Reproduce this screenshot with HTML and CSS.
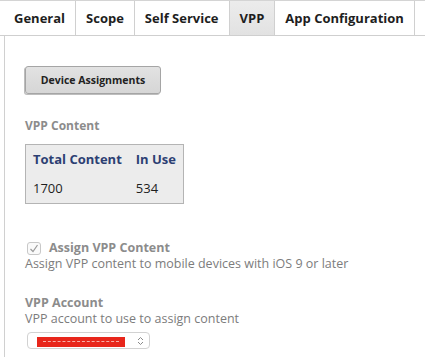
FILE: index.html
```html
<!DOCTYPE html>
<html lang="en">
<head>
  <meta charset="UTF-8" />
  <title>VPP</title>
  <link rel="stylesheet" href="styles.css">
</head>
<body>
  <div class="tabs">
    <a class="tab">General</a>
    <a class="tab">Scope</a>
    <a class="tab">Self Service</a>
    <a class="tab active">VPP</a>
    <a class="tab">App Configuration</a>
  </div>

  <div class="panel">
    <button class="btn">Device Assignments</button>

    <div class="label content-label">VPP Content</div>
    <table class="counts">
      <tr>
        <th>Total Content</th>
        <th>In Use</th>
      </tr>
      <tr>
        <td>1700</td>
        <td>534</td>
      </tr>
    </table>

    <div class="field assign">
      <label class="check-row">
        <span class="checkbox">
          <svg width="10" height="9" viewBox="0 0 10 9"><path d="M1.5 5 L4 7.5 L8.5 1" fill="none" stroke="#9a9a9a" stroke-width="1.2"/></svg>
        </span>
        <span class="label">Assign VPP Content</span>
      </label>
      <div class="help">Assign VPP content to mobile devices with iOS 9 or later</div>
    </div>

    <div class="field account">
      <div class="label">VPP Account</div>
      <div class="help">VPP account to use to assign content</div>
      <div class="select">
        <span class="redacted"></span>
        <svg class="arrows" width="7" height="10" viewBox="0 0 7 10"><path d="M1 4 L3.5 1.5 L6 4 M1 6 L3.5 8.5 L6 6" fill="none" stroke="#8a8a8a" stroke-width="1"/></svg>
      </div>
    </div>
  </div>
</body>
</html>
```

FILE: styles.css
```css
* {
  box-sizing: border-box;
}

body {
  margin: 0;
  font-family: "Open Sans", "DejaVu Sans", sans-serif;
  background: #fff;
  color: #222;
  overflow: hidden;
}

.tabs {
  display: flex;
  height: 36px;
  padding-left: 4px;
  border-top: 1px solid #d4d4d4;
  border-bottom: 1px solid #cfcfcf;
}

.tab {
  display: flex;
  align-items: center;
  padding: 0 10px;
  border-right: 1px solid #d0d0d0;
  font-size: 13px;
  font-weight: 700;
  color: #1e1e1e;
}

.tab.active {
  background: linear-gradient(#ececec, #e2e2e2);
}

.panel {
  height: 321px;
  margin-left: 4px;
  border-left: 1px solid #d0d0d0;
  padding: 30px 0 0 20px;
}

.btn {
  display: block;
  width: 136px;
  height: 28px;
  padding: 0;
  border: 1px solid #a5a5a5;
  border-radius: 3px;
  background: linear-gradient(#e2e2e2, #d6d6d6);
  box-shadow: -1px 1px 0 #bdbdbd;
  font-family: inherit;
  font-size: 10.5px;
  font-weight: 700;
  color: #222;
}

.label {
  font-size: 12.5px;
  font-weight: 700;
  line-height: 16px;
  color: #8c8c8c;
}

.content-label {
  margin-top: 24px;
  font-size: 12px;
}

.counts {
  margin-top: 10px;
  border-collapse: collapse;
  border: 1px solid #b4b4b4;
  background: #ececec;
  font-size: 13px;
  line-height: 17px;
}

.counts th,
.counts td {
  padding: 6px 7px;
  text-align: left;
}

.counts th {
  color: #2c3f73;
}

.counts td {
  color: #1e1e1e;
}

.assign {
  margin-top: 36px;
}

.check-row {
  display: flex;
  align-items: center;
  gap: 8px;
  margin-left: 2px;
}

.checkbox {
  display: flex;
  align-items: center;
  justify-content: center;
  width: 14px;
  height: 13px;
  border: 1px solid #c8c8c8;
  border-radius: 3px;
  background: #fafafa;
}

.help {
  font-size: 12.5px;
  line-height: 16px;
  color: #7c7c7c;
}

.account {
  margin-top: 23px;
}

.select {
  position: relative;
  width: 123px;
  height: 17px;
  margin: 5px 0 0 2px;
  border: 1px solid #d2d2d2;
  border-radius: 4px;
  background: #fff;
}

.redacted {
  position: absolute;
  left: 9px;
  top: 4px;
  width: 88px;
  height: 10px;
  background: #e8261b;
}

.redacted::after {
  content: "";
  position: absolute;
  left: 6px;
  right: 6px;
  top: 4px;
  border-top: 1px dashed #f6b0a8;
}

.arrows {
  position: absolute;
  right: 5px;
  top: 3px;
}
```
